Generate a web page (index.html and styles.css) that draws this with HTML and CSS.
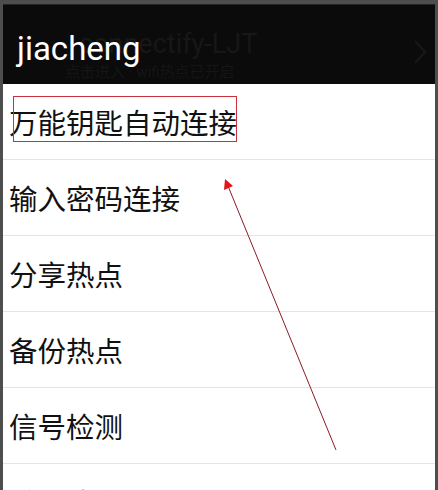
FILE: index.html
```html
<!DOCTYPE html>
<html lang="zh">
<head>
<meta charset="utf-8">
<title>jiacheng</title>
<link rel="stylesheet" href="styles.css">
</head>
<body>
<div class="frame">
  <header class="bar">
    <div class="bar-text">
      <div class="ghost-title">connectify-LJT</div>
      <div class="ghost-sub">点击进入 · wifi热点已开启</div>
    </div>
    <svg class="chev" width="14" height="26" viewBox="0 0 14 26"><path d="M2 2 L12 13 L2 24" fill="none" stroke="#171717" stroke-width="2.4"/></svg>
    <div class="overlay-name">jiacheng</div>
  </header>
  <ul class="menu">
    <li class="item">万能钥匙自动连接</li>
    <li class="item">输入密码连接</li>
    <li class="item">分享热点</li>
    <li class="item">备份热点</li>
    <li class="item">信号检测</li>
    <li class="item">关于我们</li>
  </ul>
  <svg class="annot" width="438" height="490" viewBox="0 0 438 490">
    <rect x="13.5" y="96.5" width="223" height="45" fill="none" stroke="#c8323c" stroke-width="1"/>
    <line x1="336" y1="450" x2="228" y2="186" stroke="#8a1c24" stroke-width="1"/>
    <polygon points="225,179 224,190 233,186" fill="#e0141c"/>
  </svg>
</div>
</body>
</html>
```

FILE: styles.css
```css
html, body {
  margin: 0;
  padding: 0;
}
body {
  width: 438px;
  height: 490px;
  overflow: hidden;
  background: #4e4e4e;
}
.frame {
  position: relative;
  padding: 4px 3px 0 3px;
  height: 486px;
  overflow: hidden;
}
.bar {
  position: relative;
  height: 79px;
  border-top: 1px solid #262626;
  background: #0b0b0b;
  display: flex;
  align-items: flex-start;
}
.bar-text {
  flex: 1;
  display: flex;
  flex-direction: column;
}
.ghost-title {
  font-family: Roboto, "Liberation Sans", sans-serif;
  font-size: 27px;
  line-height: 30px;
  color: #171717;
  margin: 24px 0 0 76px;
}
.ghost-sub {
  font-family: Roboto, "Noto Sans CJK SC", sans-serif;
  font-size: 15px;
  line-height: 18px;
  color: #151515;
  margin: 4px 0 0 62px;
}
.chev {
  margin: 34px 8px 0 0;
}
.overlay-name {
  position: absolute;
  left: 14px;
  top: 24px;
  font-family: Roboto, "Liberation Sans", sans-serif;
  font-size: 33px;
  line-height: 40px;
  color: #ffffff;
}
.menu {
  list-style: none;
  margin: 0;
  padding: 0;
  background: #ffffff;
}
.item {
  height: 75px;
  border-bottom: 1px solid #e4e4e4;
  display: flex;
  align-items: center;
  padding-left: 6px;
  font-family: "Noto Sans CJK SC", sans-serif;
  font-size: 28.5px;
  color: #111111;
}
.annot {
  position: absolute;
  left: 0;
  top: 0;
  pointer-events: none;
}
```
